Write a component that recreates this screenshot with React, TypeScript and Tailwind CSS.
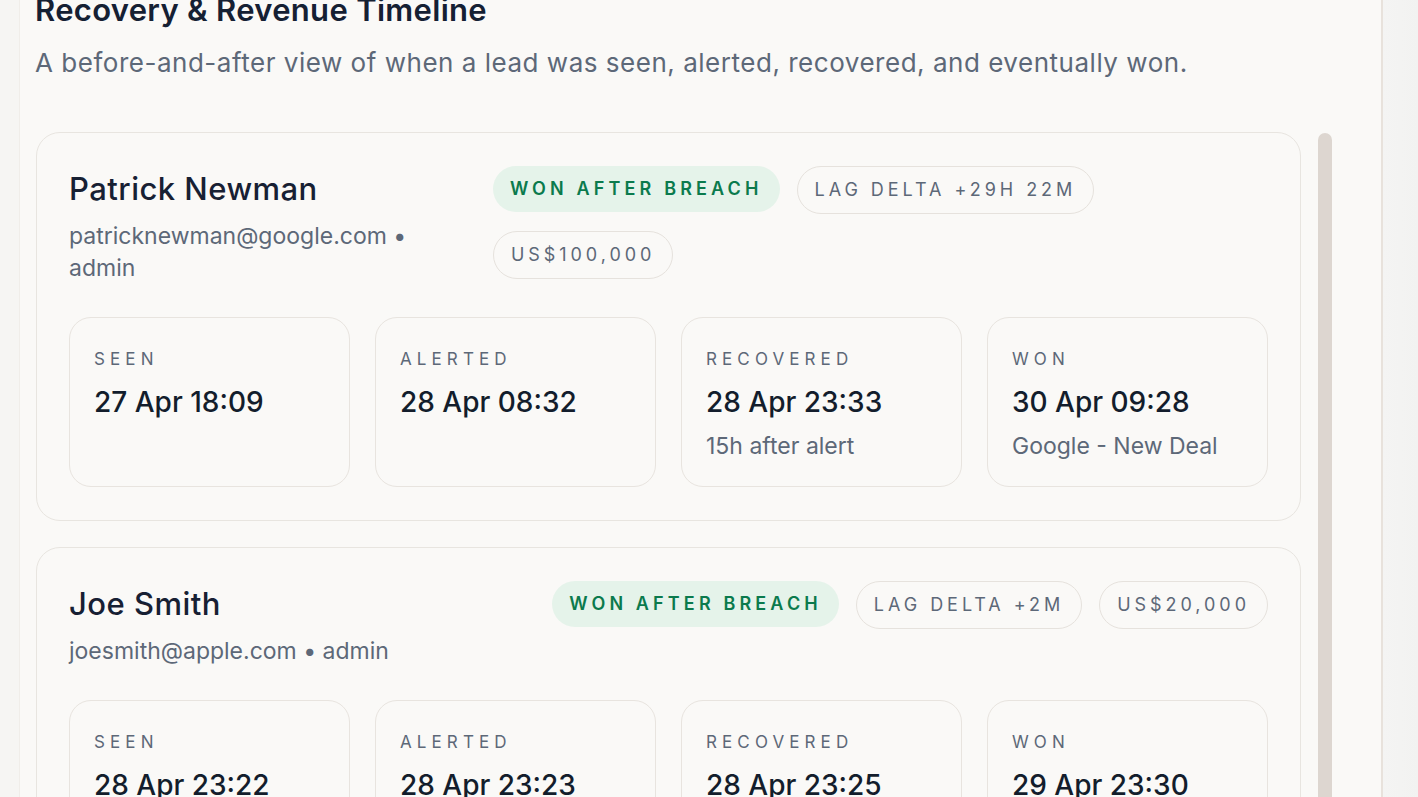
import React from 'react'

type Stage = { label: string; value: string; note?: string }
type Lead = {
  name: string
  email: string
  role: string
  lag: string
  amount: string
  stages: Stage[]
}

const leads: Lead[] = [
  {
    name: 'Patrick Newman',
    email: 'patricknewman@google.com',
    role: 'admin',
    lag: 'Lag delta +29h 22m',
    amount: 'US$100,000',
    stages: [
      { label: 'Seen', value: '27 Apr 18:09' },
      { label: 'Alerted', value: '28 Apr 08:32' },
      { label: 'Recovered', value: '28 Apr 23:33', note: '15h after alert' },
      { label: 'Won', value: '30 Apr 09:28', note: 'Google - New Deal' },
    ],
  },
  {
    name: 'Joe Smith',
    email: 'joesmith@apple.com',
    role: 'admin',
    lag: 'Lag delta +2m',
    amount: 'US$20,000',
    stages: [
      { label: 'Seen', value: '28 Apr 23:22' },
      { label: 'Alerted', value: '28 Apr 23:23' },
      { label: 'Recovered', value: '28 Apr 23:25', note: '2m after alert' },
      { label: 'Won', value: '29 Apr 23:30', note: 'Apple - Renewal' },
    ],
  },
]

function Pill({ children, tone = 'plain' }: { children: React.ReactNode; tone?: 'won' | 'plain' }) {
  if (tone === 'won') {
    return (
      <span className="rounded-full bg-[#e5f3ea] px-[17px] py-[11px] text-[18px] font-semibold uppercase leading-[24px] tracking-[0.23em] whitespace-nowrap text-[#0b7a4d]">
        {children}
      </span>
    )
  }
  return (
    <span className="rounded-full border-[1.5px] border-[#e6e2dd] px-[17px] py-[11px] text-[18px] uppercase leading-[24px] tracking-[0.22em] whitespace-nowrap text-[#5d6878]">
      {children}
    </span>
  )
}

function LeadCard({ lead }: { lead: Lead }) {
  return (
    <div className="rounded-[24px] border-[1.5px] border-[#e8e5e0] bg-[#faf9f7] px-[32px] pt-[33px] pb-[33px]">
      {/* header row */}
      <div className="flex items-start justify-between gap-[26px]">
        <div className="min-w-0">
          <div className="text-[31px] font-medium leading-[46px] tracking-[0.015em] text-[#172033]">{lead.name}</div>
          <div className="mt-[8px] text-[23px] leading-[32px] text-[#5d6878]">
            {lead.email} • {lead.role}
          </div>
        </div>
        <div className="flex flex-wrap items-start gap-x-[17px] gap-y-[17px]">
          <Pill tone="won">Won after breach</Pill>
          <Pill>{lead.lag}</Pill>
          <Pill>{lead.amount}</Pill>
        </div>
      </div>

      {/* stages */}
      <div className="mt-[33px] grid grid-cols-4 gap-[25px]">
        {lead.stages.map(s => (
          <div
            key={s.label}
            className="rounded-[22px] border-[1.5px] border-[#e8e4df] px-[24px] pt-[29px] pb-[25px]"
          >
            <div className="text-[17px] uppercase leading-[24px] tracking-[0.3em] text-[#5d6878]">{s.label}</div>
            <div className="mt-[14px] text-[28px] font-medium leading-[34px] text-[#131d2c]">{s.value}</div>
            {s.note && <div className="mt-[12px] text-[23px] leading-[30px] text-[#5d6878]">{s.note}</div>}
          </div>
        ))}
      </div>
    </div>
  )
}

export default function App() {
  return (
    <div
      className="flex h-screen overflow-hidden bg-[#f3f3f1]"
      style={{ fontFamily: 'Inter, "Noto Sans", "Liberation Sans", sans-serif' }}
    >
      <div className="w-[19px] shrink-0 bg-[#f6f5f3]" />
      <section className="w-[1364px] shrink-0 border-l border-r-2 border-l-[#f0ede9] border-r-[#e8e2dc] bg-[#faf9f7] pl-[15px]">
        <h2 className="-mt-[8px] text-[31px] font-semibold leading-[36px] tracking-[0.01em] text-[#152033]">
          Recovery &amp; Revenue Timeline
        </h2>
        <p className="mt-[18px] text-[26px] leading-[34px] tracking-[0.02em] text-[#5d6878]">
          A before-and-after view of when a lead was seen, alerted, recovered, and eventually won.
        </p>

        <div className="ml-[1px] mt-[52px] flex items-start gap-[17px]">
          <div className="flex w-[1265px] shrink-0 flex-col gap-[26px]">
            {leads.map(l => (
              <LeadCard key={l.name} lead={l} />
            ))}
          </div>
          <div className="mt-[1px] h-[900px] w-[14px] shrink-0 rounded-full bg-[#ddd6d0]" />
        </div>
      </section>
      <div className="flex-1 bg-gradient-to-r from-[#f4f4f3] to-[#f2f2f1]" />
    </div>
  )
}
